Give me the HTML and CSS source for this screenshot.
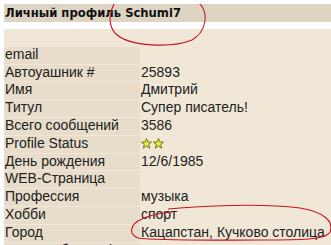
FILE: index.html
```html
<!DOCTYPE html>
<html lang="ru">
<head>
    <meta charset="UTF-8">
    <title>Личный профиль Schumi7</title>
    <link rel="stylesheet" href="styles.css">
</head>
<body>
    <div class="profile">
        <h2 class="profile-title">Личный профиль Schumi7</h2>

        <div class="profile-table">
            <div class="spacer"></div>
            <div class="label">email</div><div class="value"></div>
            <div class="label">Автоуашник #</div><div class="value">25893</div>
            <div class="label">Имя</div><div class="value">Дмитрий</div>
            <div class="label">Титул</div><div class="value">Супер писатель!</div>
            <div class="label">Всего сообщений</div><div class="value">3586</div>
            <div class="label">Profile Status</div>
            <div class="value">
                <span class="stars">
                    <svg width="11" height="11" viewBox="0 0 11 11"><polygon points="5.5,0.5 6.9,4 10.5,4.1 7.7,6.4 8.7,10.2 5.5,8 2.3,10.2 3.3,6.4 0.5,4.1 4.1,4" fill="#e6ea3a" stroke="#6b6a18" stroke-width="0.9"/></svg>
                    <svg width="11" height="11" viewBox="0 0 11 11"><polygon points="5.5,0.5 6.9,4 10.5,4.1 7.7,6.4 8.7,10.2 5.5,8 2.3,10.2 3.3,6.4 0.5,4.1 4.1,4" fill="#e6ea3a" stroke="#6b6a18" stroke-width="0.9"/></svg>
                </span>
            </div>
            <div class="label">День рождения</div><div class="value">12/6/1985</div>
            <div class="label">WEB-Страница</div><div class="value"></div>
            <div class="label">Профессия</div><div class="value">музыка</div>
            <div class="label">Хобби</div><div class="value">спорт</div>
            <div class="label">Город</div><div class="value">Кацапстан, Кучково столица</div>
            <div class="label">Краткая биография</div><div class="value"></div>
        </div>

        <!-- hand drawn marks -->
        <svg class="scribble" width="331" height="245" viewBox="0 0 331 245">
            <path d="M118 -2 C110 8 106 24 116 34 C130 47 172 48 192 40 C206 32 209 14 200 4 C196 0 190 -1 186 -2" fill="none" stroke="#c8141c" stroke-width="1.1"/>
            <path d="M168 209 C200 206 260 203 300 208 C325 212 334 222 330 232 C326 240 300 240 260 240 C210 240 160 241 138 238 C128 234 130 224 142 219 C150 215 160 213 172 212" fill="none" stroke="#c8141c" stroke-width="1.1"/>
        </svg>
    </div>
</body>
</html>
```

FILE: styles.css
```css
body {
    margin: 4px 0 0 4px;
    background: #ffffff;
    font-family: 'Liberation Sans', Arial, sans-serif;
    font-size: 14px;
    color: #222;
    overflow: hidden;
}

.profile {
    position: relative;
}

.profile-title {
    margin: 0 0 7px 0;
    height: 18px;
    line-height: 18px;
    padding-left: 1px;
    background: #ddd4c4;
    font-family: 'DejaVu Sans', Verdana, sans-serif;
    font-size: 11.6px;
    font-weight: bold;
    color: #111;
}

.profile-table {
    display: grid;
    grid-template-columns: 136px 1fr;
    grid-template-rows: 15.8px;
    grid-auto-rows: 16.8px;
    row-gap: 1px;
    padding-top: 1px;
    background: #f0e7d7;
}

.spacer {
    grid-column: 1 / 3;
}

.label,
.value {
    padding-left: 1px;
    line-height: 15.8px;
    padding-bottom: 1px;
    white-space: nowrap;
}

.label {
    background: #e7ddca;
}

.stars {
    display: inline-flex;
    gap: 1px;
    vertical-align: -1px;
}

.scribble {
    position: absolute;
    left: -4px;
    top: -4px;
    pointer-events: none;
}
```
